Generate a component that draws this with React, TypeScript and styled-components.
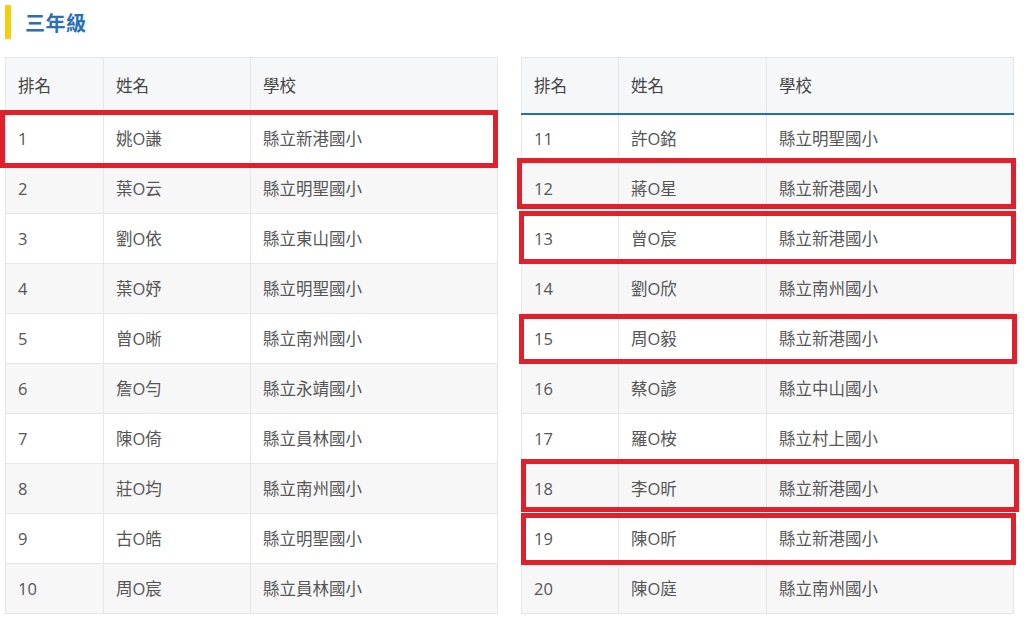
import React from "react";
import styled, { createGlobalStyle } from "styled-components";

const Global = createGlobalStyle`
  html, body { margin: 0; padding: 0; background: #ffffff; }
  body { font-family: "Open Sans", "Noto Sans CJK TC", sans-serif; }
`;

const Page = styled.div`
  position: relative;
  width: 1024px;
  height: 632px;
  padding: 5px 0 0 5px;
  box-sizing: border-box;
  overflow: hidden;
`;

const Title = styled.h2`
  margin: 0;
  height: 34px;
  display: flex;
  align-items: center;
  border-left: 6px solid #f5cf0c;
  padding-left: 14px;
  font-family: "Noto Sans CJK TC", sans-serif;
  font-size: 20px;
  font-weight: 700;
  color: #2a6fb8;
  letter-spacing: 0.5px;
`;

const Tables = styled.div`
  display: flex;
  gap: 23px;
  margin-top: 18px;
`;

const Table = styled.table`
  width: 492px;
  border-collapse: collapse;
  table-layout: fixed;
  border: 1px solid #e4e6ea;
  font-family: "Open Sans", "Noto Sans CJK TC", sans-serif;
  font-size: 16.5px;
  line-height: 20px;
`;

const Th = styled.th<{ $accent?: boolean }>`
  height: 56px;
  box-sizing: border-box;
  text-align: left;
  font-weight: 400;
  color: #444;
  background: #f6f7f9;
  padding: 0 12px 1px;
  border-right: 1px solid #e4e6ea;
  border-bottom: ${(p) => (p.$accent ? "2px solid #1f6fc0" : "1px solid #e4e6ea")};
  font-family: "Noto Sans CJK TC", sans-serif;
`;

const Tr = styled.tr<{ $alt: boolean }>`
  background: ${(p) => (p.$alt ? "#f7f7f8" : "#ffffff")};
`;

const Td = styled.td`
  height: 50px;
  box-sizing: border-box;
  padding: 0 12px;
  color: #555;
  border-right: 1px solid #e4e6ea;
  border-bottom: 1px solid #e4e6ea;
  white-space: nowrap;
`;

const Mark = styled.div`
  position: absolute;
  border: 5px solid #e0212b;
  box-sizing: border-box;
  pointer-events: none;
`;

type Row = [string, string, string];

const left: Row[] = [
  ["1", "姚O謙", "縣立新港國小"],
  ["2", "葉O云", "縣立明聖國小"],
  ["3", "劉O依", "縣立東山國小"],
  ["4", "葉O妤", "縣立明聖國小"],
  ["5", "曾O晰", "縣立南州國小"],
  ["6", "詹O勻", "縣立永靖國小"],
  ["7", "陳O倚", "縣立員林國小"],
  ["8", "莊O均", "縣立南州國小"],
  ["9", "古O皓", "縣立明聖國小"],
  ["10", "周O宸", "縣立員林國小"],
];

const right: Row[] = [
  ["11", "許O銘", "縣立明聖國小"],
  ["12", "蔣O星", "縣立新港國小"],
  ["13", "曾O宸", "縣立新港國小"],
  ["14", "劉O欣", "縣立南州國小"],
  ["15", "周O毅", "縣立新港國小"],
  ["16", "蔡O諺", "縣立中山國小"],
  ["17", "羅O桉", "縣立村上國小"],
  ["18", "李O昕", "縣立新港國小"],
  ["19", "陳O昕", "縣立新港國小"],
  ["20", "陳O庭", "縣立南州國小"],
];

const marks = [
  { l: 0, t: 110, w: 498, h: 58 },
  { l: 517, t: 158, w: 499, h: 51 },
  { l: 519, t: 211, w: 497, h: 53 },
  { l: 519, t: 314, w: 498, h: 50 },
  { l: 521, t: 459, w: 498, h: 53 },
  { l: 521, t: 513, w: 495, h: 52 },
];

function RankTable({ rows, accent, widths }: { rows: Row[]; accent?: boolean; widths: number[] }) {
  return (
    <Table>
      <colgroup>
        {widths.map((w, i) => (
          <col key={i} style={{ width: w }} />
        ))}
      </colgroup>
      <thead>
        <tr>
          <Th $accent={accent}>排名</Th>
          <Th $accent={accent}>姓名</Th>
          <Th $accent={accent}>學校</Th>
        </tr>
      </thead>
      <tbody>
        {rows.map((r, i) => (
          <Tr key={r[0]} $alt={i % 2 === 1}>
            <Td>{r[0]}</Td>
            <Td>{r[1]}</Td>
            <Td>{r[2]}</Td>
          </Tr>
        ))}
      </tbody>
    </Table>
  );
}

export default function App() {
  return (
    <Page>
      <Global />
      <Title>三年級</Title>
      <Tables>
        <RankTable rows={left} widths={[98, 147, 247]} />
        <RankTable rows={right} accent widths={[97, 148, 247]} />
      </Tables>
      {marks.map((m, i) => (
        <Mark key={i} style={{ left: m.l, top: m.t, width: m.w, height: m.h }} />
      ))}
    </Page>
  );
}
